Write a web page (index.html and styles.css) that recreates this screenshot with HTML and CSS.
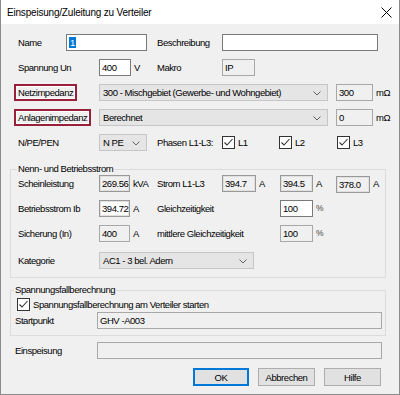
FILE: index.html
```html
<!DOCTYPE html>
<html lang="de">
<head>
  <meta charset="UTF-8">
  <title>Einspeisung/Zuleitung zu Verteiler</title>
  <link rel="stylesheet" href="styles.css">
</head>
<body>
  <div class="window">
    <div class="titlebar">
      <span class="title">Einspeisung/Zuleitung zu Verteiler</span>
      <svg class="close" width="11" height="11" viewBox="0 0 11 11">
        <path d="M0.5 0.5 L10.5 10.5 M10.5 0.5 L0.5 10.5" stroke="#000" stroke-width="1" fill="none"/>
      </svg>
    </div>

    <div class="client">
      <div class="rows">
        <div class="row">
          <span class="lbl w48">Name</span>
          <div class="field w81"><span class="sel">1</span></div>
          <span class="lbl w65 ml10">Beschreibung</span>
          <div class="field w156"></div>
        </div>

        <div class="row">
          <span class="lbl w81">Spannung Un</span>
          <div class="field w32">400</div>
          <span class="unit w26">V</span>
          <span class="lbl w65">Makro</span>
          <div class="field ro w33">IP</div>
        </div>

        <div class="row">
          <span class="lbl w81"><span class="mark">Netzimpedanz</span></span>
          <div class="combo w229">300 - Mischgebiet (Gewerbe- und Wohngebiet)
            <svg class="chev" width="8" height="5" viewBox="0 0 8 5"><path d="M0.5 0.5 L4 4 L7.5 0.5" stroke="#606060" fill="none"/></svg>
          </div>
          <div class="field ro w37 ml8">300</div>
          <span class="unit">mΩ</span>
        </div>

        <div class="row">
          <span class="lbl w81"><span class="mark">Anlagenimpedanz</span></span>
          <div class="combo w229">Berechnet
            <svg class="chev" width="8" height="5" viewBox="0 0 8 5"><path d="M0.5 0.5 L4 4 L7.5 0.5" stroke="#606060" fill="none"/></svg>
          </div>
          <div class="field ro w37 ml8">0</div>
          <span class="unit">mΩ</span>
        </div>

        <div class="row">
          <span class="lbl w81">N/PE/PEN</span>
          <div class="combo w48">N PE
            <svg class="chev" width="8" height="5" viewBox="0 0 8 5"><path d="M0.5 0.5 L4 4 L7.5 0.5" stroke="#606060" fill="none"/></svg>
          </div>
          <span class="lbl w65 ml10">Phasen L1-L3:</span>
          <label class="check w57"><span class="box"><svg width="11" height="11" viewBox="0 0 11 11"><path d="M1.5 5.5 L4 8 L9.5 2" stroke="#333" stroke-width="1.1" fill="none"/></svg></span>L1</label>
          <label class="check w58"><span class="box"><svg width="11" height="11" viewBox="0 0 11 11"><path d="M1.5 5.5 L4 8 L9.5 2" stroke="#333" stroke-width="1.1" fill="none"/></svg></span>L2</label>
          <label class="check"><span class="box"><svg width="11" height="11" viewBox="0 0 11 11"><path d="M1.5 5.5 L4 8 L9.5 2" stroke="#333" stroke-width="1.1" fill="none"/></svg></span>L3</label>
        </div>
      </div>

      <fieldset class="group group-strom">
        <legend>Nenn- und Betriebsstrom</legend>
        <div class="rows">
          <div class="row">
            <span class="lbl w81">Scheinleistung</span>
            <div class="field sunk w31">269.56</div>
            <span class="unit w27">kVA</span>
            <span class="lbl w65">Strom L1-L3</span>
            <div class="field sunk w34">394.7</div>
            <span class="unit w24">A</span>
            <div class="field sunk w33">394.5</div>
            <span class="unit w23">A</span>
            <div class="field sunk w34 low">378.0</div>
            <span class="unit">A</span>
          </div>

          <div class="row">
            <span class="lbl w81">Betriebsstrom Ib</span>
            <div class="field sunk white w31">394.72</div>
            <span class="unit w27">A</span>
            <span class="lbl w123">Gleichzeitigkeit</span>
            <div class="field w33">100</div>
            <span class="unit pct">%</span>
          </div>

          <div class="row">
            <span class="lbl w81">Sicherung (In)</span>
            <div class="field ro w31">400</div>
            <span class="unit w27">A</span>
            <span class="lbl w123">mittlere Gleichzeitigkeit</span>
            <div class="field ro w33">100</div>
            <span class="unit pct">%</span>
          </div>

          <div class="row cat-row">
            <span class="lbl w81">Kategorie</span>
            <div class="combo w155">AC1 - 3 bel. Adern
              <svg class="chev" width="8" height="5" viewBox="0 0 8 5"><path d="M0.5 0.5 L4 4 L7.5 0.5" stroke="#606060" fill="none"/></svg>
            </div>
          </div>
        </div>
      </fieldset>

      <fieldset class="group group-fall">
        <legend>Spannungsfallberechnung</legend>
        <label class="check check-row"><span class="box"><svg width="11" height="11" viewBox="0 0 11 11"><path d="M1.5 5.5 L4 8 L9.5 2" stroke="#333" stroke-width="1.1" fill="none"/></svg></span>Spannungsfallberechnung am Verteiler starten</label>
        <div class="row start-row">
          <span class="lbl w82">Startpunkt</span>
          <div class="field ro w285">GHV -A003</div>
        </div>
      </fieldset>

      <div class="row feed-row">
        <span class="lbl w82">Einspeisung</span>
        <div class="field ro w285"></div>
      </div>

      <div class="buttons">
        <button class="btn default w56">OK</button>
        <button class="btn w57">Abbrechen</button>
        <button class="btn w57">Hilfe</button>
      </div>
    </div>
  </div>
</body>
</html>
```

FILE: styles.css
```css
html, body {
  margin: 0;
  padding: 0;
}
body {
  width: 400px;
  height: 395px;
  overflow: hidden;
  font-family: "Liberation Sans", Arial, sans-serif;
  font-size: 9.5px;
  letter-spacing: -0.45px;
  color: #000;
}
.window {
  width: 400px;
  height: 395px;
  box-sizing: border-box;
  border: 1px solid #8c8c8c;
  border-top: none;
  background: #f0f0f0;
  display: flex;
  flex-direction: column;
}
.titlebar {
  height: 24px;
  flex: none;
  background: #fff;
  display: flex;
  align-items: center;
  justify-content: space-between;
  padding: 0 7px 0 6px;
}
.title {
  font-size: 10px;
  letter-spacing: -0.2px;
}
.client {
  flex: 1;
  padding: 10px 18px 0 17px;
  display: flex;
  flex-direction: column;
}
.rows {
  display: flex;
  flex-direction: column;
  gap: 8px;
}
.row {
  display: flex;
  align-items: center;
  height: 17px;
}
.lbl, .unit {
  flex: none;
  white-space: nowrap;
  line-height: 13px;
}
.unit {
  padding-left: 3px;
  box-sizing: border-box;
}
.pct {
  color: #444;
  font-size: 8.5px;
}

/* widths */
.w23 { width: 23px; }
.w24 { width: 24px; }
.w26 { width: 26px; }
.w27 { width: 27px; }
.w31 { width: 31px; }
.w32 { width: 32px; }
.w33 { width: 33px; }
.w34 { width: 34px; }
.w37 { width: 37px; }
.w48 { width: 48px; }
.w56 { width: 56px; }
.w57 { width: 57px; }
.w58 { width: 58px; }
.w65 { width: 65px; }
.w81 { width: 81px; }
.w82 { width: 82px; }
.w123 { width: 123px; }
.w155 { width: 155px; }
.w156 { width: 156px; }
.w229 { width: 229px; }
.w285 { width: 285px; }
.ml8 { margin-left: 8px; }
.ml10 { margin-left: 10px; }

.field {
  flex: none;
  box-sizing: border-box;
  height: 17px;
  border: 1px solid #7a7a7a;
  background: #fff;
  padding: 0 2px;
  line-height: 15px;
  white-space: nowrap;
  overflow: hidden;
}
.field.ro {
  background: #f0f0f0;
  border-color: #a8a8a8;
}
.field.sunk {
  background: #f0f0f0;
  border-color: #999;
  box-shadow: inset 0 0 0 1px #e0e0e0;
  padding-left: 2px;
}
.field.sunk.white {
  background: #fff;
}
.field.low {
  margin-top: 2px;
}
.sel {
  background: #0078d7;
  color: #fff;
  padding: 0 1px;
}
.mark {
  display: inline-block;
  box-sizing: border-box;
  height: 17px;
  margin-left: -4px;
  padding: 0 2px;
  border: 2px solid #98203a;
  box-shadow: inset 0 0 0 1px #fff;
  line-height: 13px;
}
.combo {
  flex: none;
  position: relative;
  box-sizing: border-box;
  height: 17px;
  border: 1px solid #c6c6c6;
  background: #e5e5e5;
  padding-left: 3px;
  line-height: 15px;
  white-space: nowrap;
}
.chev {
  position: absolute;
  right: 6px;
  top: 6px;
}
.check {
  flex: none;
  display: flex;
  align-items: center;
  line-height: 13px;
}
.box {
  box-sizing: border-box;
  width: 13px;
  height: 13px;
  border: 1px solid #333;
  background: #fff;
  margin-right: 3px;
  display: flex;
}

.group {
  margin: 12px 0 0 -8px;
  width: 376px;
  box-sizing: border-box;
  border: 1px solid #dcdcdc;
  min-inline-size: 0;
}
.group legend {
  padding: 0 1px;
  margin-left: -1px;
  line-height: 12px;
}
.group-strom {
  padding: 0 0 8px 7px;
}
.cat-row {
  margin-top: 2px;
}
.group-fall {
  margin-top: 6px;
  padding: 2px 0 6px 4px;
}
.check-row {
  height: 13px;
  margin-left: 2px;
}
.start-row {
  margin-top: 1px;
}
.feed-row {
  margin: 6px 0 0 -3px;
}

.buttons {
  display: flex;
  justify-content: flex-end;
  gap: 9px;
  margin-top: 9px;
}
.btn {
  box-sizing: border-box;
  height: 18px;
  padding: 0;
  border: 1px solid #adadad;
  background: #e1e1e1;
  font-family: inherit;
  font-size: 9.5px;
  letter-spacing: -0.45px;
  color: #000;
}
.btn.default {
  border: 2px solid #0078d7;
}
```
